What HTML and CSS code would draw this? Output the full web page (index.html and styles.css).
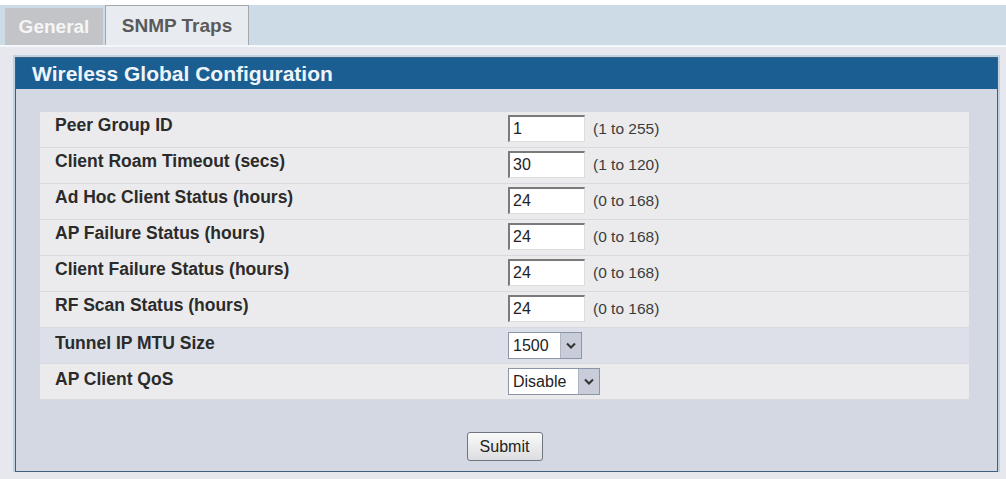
FILE: index.html
```html
<!DOCTYPE html>
<html>
<head>
  <title>Wireless Global Configuration</title>
  <link rel="stylesheet" href="styles.css">
</head>
<body>

  <div class="topline"></div>

  <div class="tabbar">
    <div class="tab tab-active">General</div>
    <div class="tab tab-other">SNMP Traps</div>
  </div>

  <div class="panel">
    <div class="panel-head">Wireless Global Configuration</div>

    <form class="config" onsubmit="return false;">
      <div class="row">
        <div class="label">Peer Group ID</div>
        <input class="field" type="text" value="1">
        <span class="range">(1 to 255)</span>
      </div>
      <div class="row">
        <div class="label">Client Roam Timeout (secs)</div>
        <input class="field" type="text" value="30">
        <span class="range">(1 to 120)</span>
      </div>
      <div class="row">
        <div class="label">Ad Hoc Client Status (hours)</div>
        <input class="field" type="text" value="24">
        <span class="range">(0 to 168)</span>
      </div>
      <div class="row">
        <div class="label">AP Failure Status (hours)</div>
        <input class="field" type="text" value="24">
        <span class="range">(0 to 168)</span>
      </div>
      <div class="row">
        <div class="label">Client Failure Status (hours)</div>
        <input class="field" type="text" value="24">
        <span class="range">(0 to 168)</span>
      </div>
      <div class="row">
        <div class="label">RF Scan Status (hours)</div>
        <input class="field" type="text" value="24">
        <span class="range">(0 to 168)</span>
      </div>
      <div class="row row-dark">
        <div class="label label-sel">Tunnel IP MTU Size</div>
        <span class="dropdown dd-mtu">
          <select>
            <option>1500</option>
          </select>
          <span class="arrow">
            <svg width="10" height="7" viewBox="0 0 10 7"><path d="M1 1.5 L5 5.5 L9 1.5" fill="none" stroke="#333" stroke-width="2"/></svg>
          </span>
        </span>
      </div>
      <div class="row">
        <div class="label label-sel">AP Client QoS</div>
        <span class="dropdown dd-qos">
          <select>
            <option>Disable</option>
            <option>Enable</option>
          </select>
          <span class="arrow">
            <svg width="10" height="7" viewBox="0 0 10 7"><path d="M1 1.5 L5 5.5 L9 1.5" fill="none" stroke="#333" stroke-width="2"/></svg>
          </span>
        </span>
      </div>

      <div class="actions">
        <button class="submit" type="submit">Submit</button>
      </div>
    </form>
  </div>

</body>
</html>
```

FILE: styles.css
```css
body {
  font-family: "Liberation Sans", Arial, sans-serif;
  background-color: #e6e8ee;
  margin: 0;
  padding: 0;
}

.topline {
  height: 5px;
  background-color: #fff;
}

/* Reiter oben */
.tabbar {
  display: flex;
  align-items: flex-end;
  height: 40px;
  background-color: #cddbe7;
  border-bottom: 2px solid #f3f6fa;
}

.tab {
  display: flex;
  align-items: center;
  justify-content: center;
  font-weight: bold;
  font-size: 19px;
  box-sizing: border-box;
}

.tab-active {
  margin-left: 5px;
  width: 98px;
  height: 37px;
  background-color: #c3c4c7;
  color: #f6f6f6;
}

.tab-other {
  margin-left: 2px;
  width: 144px;
  height: 40px;
  background-color: #e8ebef;
  color: #5a5a5a;
  border: 1px solid #a4a8ad;
  border-bottom: none;
}

/* Rahmen mit blauer Kopfzeile */
.panel {
  margin: 10px 8px 0 15px;
  background-color: #d3d8e2;
  border: 1px solid #3f607d;
  box-shadow: 0 0 0 2px #bfd2e2;
  padding-bottom: 10px;
}

.panel-head {
  height: 31px;
  line-height: 31px;
  padding-left: 16px;
  background-color: #1b5e92;
  color: #eef4fa;
  font-weight: bold;
  font-size: 21px;
}

.config {
  margin: 23px 28px 0 24px;
}

.row {
  display: flex;
  align-items: flex-start;
  height: 32px;
  padding-top: 3px;
  background-color: #ebebed;
  border-bottom: 1px solid #d9dae0;
}

.row-dark {
  background-color: #dde0e8;
}

.label {
  width: 453px;
  padding-left: 15px;
  line-height: 20px;
  font-size: 17.5px;
  font-weight: bold;
  color: #2b2b2b;
}

.label-sel {
  padding-top: 2px;
}

.field {
  box-sizing: border-box;
  width: 77px;
  height: 27px;
  margin: 0;
  padding: 0 3px;
  font-family: "Liberation Sans", Arial, sans-serif;
  font-size: 16px;
  color: #222;
  background-color: #fff;
  border: 1px solid #ddd;
  border-top: 2px solid #7a7a7a;
  border-left: 2px solid #7a7a7a;
}

.range {
  margin-left: 8px;
  margin-top: 4px;
  line-height: 20px;
  font-size: 15.5px;
  color: #3c3c3c;
}

/* Auswahlfelder */
.dropdown {
  display: inline-flex;
  box-sizing: border-box;
  height: 27px;
  margin-top: 1px;
  background-color: #fff;
  border: 1px solid #8a95a8;
}

.dropdown select {
  appearance: none;
  -webkit-appearance: none;
  border: none;
  background: transparent;
  margin: 0;
  padding: 0 2px 0 4px;
  font-family: "Liberation Sans", Arial, sans-serif;
  font-size: 16px;
  color: #222;
  outline: none;
}

.dd-mtu select {
  width: 51px;
}

.dd-qos select {
  width: 69px;
}

.arrow {
  display: flex;
  align-items: center;
  justify-content: center;
  width: 20px;
  background-color: #c9ccd9;
  border-left: 1px solid #b0b4c4;
}

.actions {
  display: flex;
  justify-content: center;
  margin-top: 32px;
}

.submit {
  width: 76px;
  height: 29px;
  font-family: "Liberation Sans", Arial, sans-serif;
  font-size: 16px;
  color: #222;
  background: linear-gradient(#fafafa, #dcdde0);
  border: 1px solid #6f7682;
  border-radius: 3px;
  cursor: pointer;
}
```
